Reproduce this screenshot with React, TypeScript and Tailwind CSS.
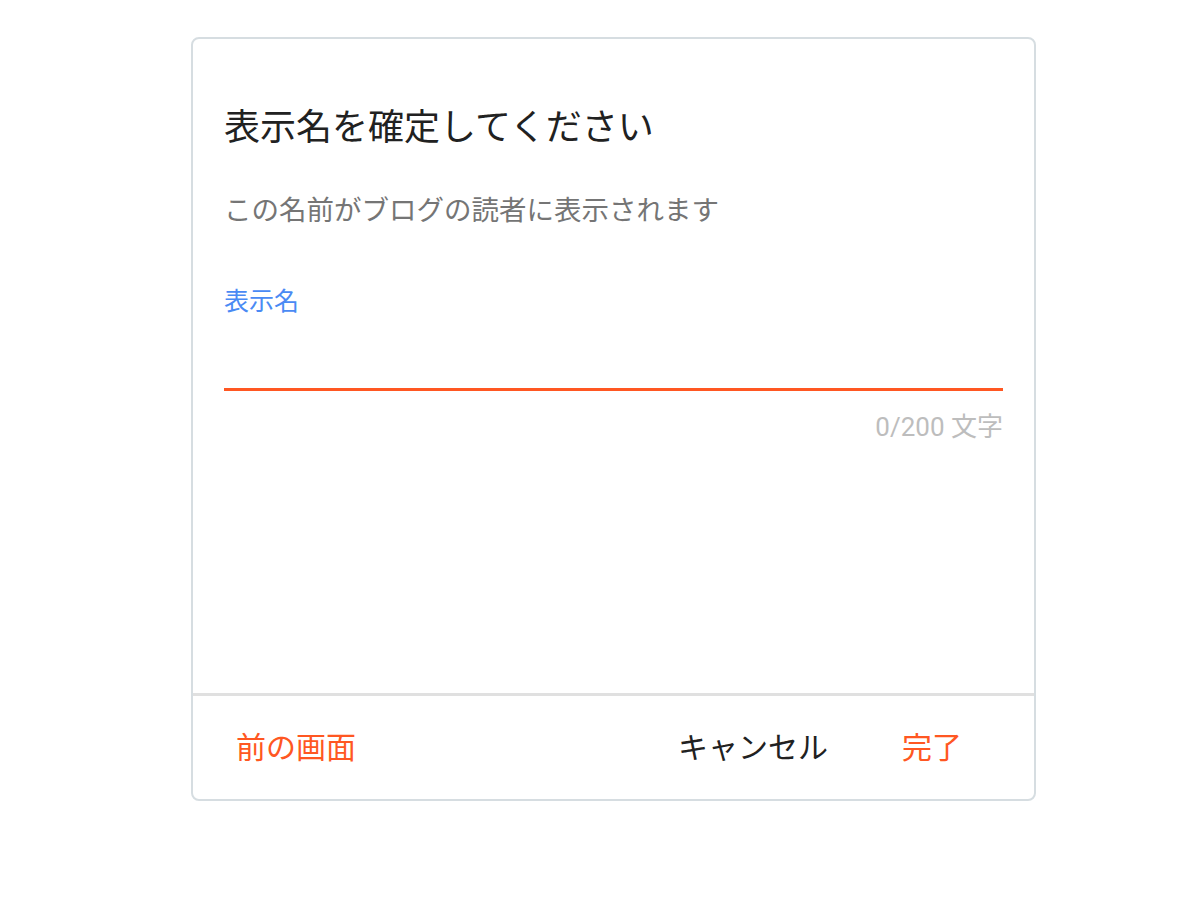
export default function App() {
  return (
    <div
      className="min-h-[905px] bg-white pl-[191px] pt-[37px]"
      style={{ fontFamily: 'Roboto, "Noto Sans CJK JP", sans-serif' }}
    >
      <div className="flex h-[764px] w-[845px] flex-col rounded-lg border-2 border-[#d6dde1] bg-white">
        <div className="flex-1 px-[31px] pt-[69px]">
          <h1 className="text-[36px] leading-[40px] font-normal text-[#212121]">
            表示名を確定してください
          </h1>
          <p className="mt-[45px] text-[27.5px] leading-[36px] text-[#757575]">
            この名前がブログの読者に表示されます
          </p>
          <label className="mt-[57px] block text-[25px] leading-[32px] text-[#4a8af4]">
            表示名
          </label>
          <input
            type="text"
            className="block h-[73px] w-full border-b-[3px] border-[#ff5722] bg-transparent text-[28px] text-[#212121] outline-none"
          />
          <div className="mt-[20px] text-right text-[26px] leading-[32px] text-[#bdbdbd]">
            0/200 文字
          </div>
        </div>
        <div className="flex h-[106px] items-center border-t-[3px] border-[#e0e0e0] pr-[72px] pl-[43px]">
          <button className="text-[30px] leading-[36px] text-[#ff5722]">
            前の画面
          </button>
          <div className="flex-1" />
          <button className="text-[30px] leading-[36px] text-[#212121]">
            キャンセル
          </button>
          <button className="ml-[74px] text-[30px] leading-[36px] text-[#ff5722]">
            完了
          </button>
        </div>
      </div>
    </div>
  );
}
